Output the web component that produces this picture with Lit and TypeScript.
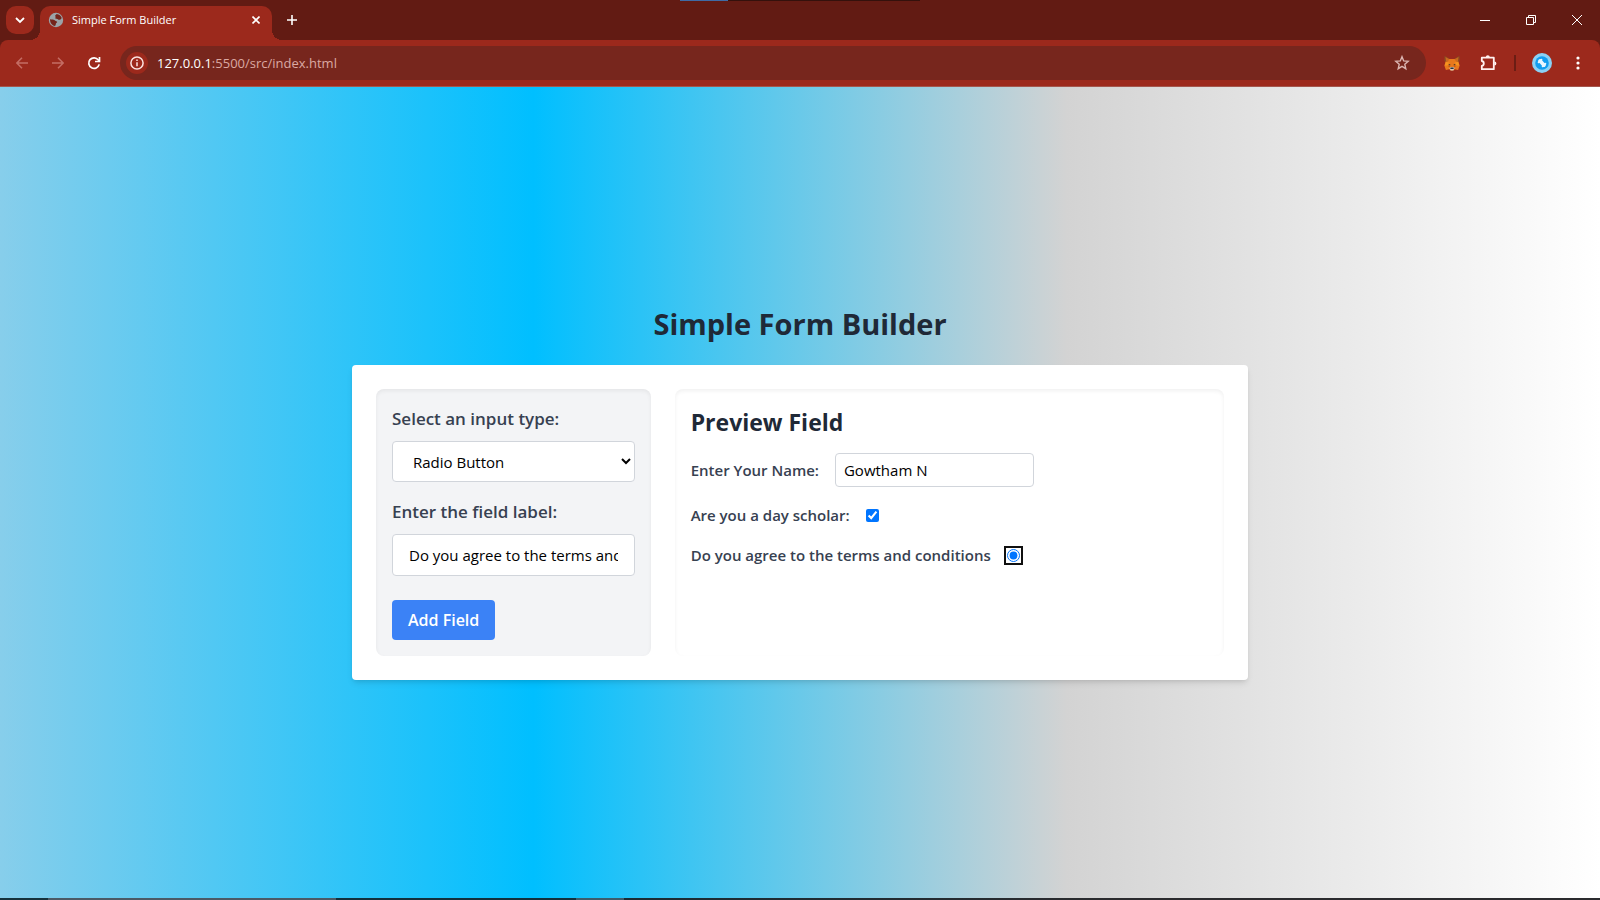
import { LitElement, html, css } from "lit";
import { customElement, property, state } from "lit/decorators.js";

const stack = css`"Segoe UI", "Open Sans", "Noto Sans", sans-serif`;

@customElement("browser-chrome")
class BrowserChrome extends LitElement {
  @property() pageTitle = "";
  @property() host = "";
  @property() path = "";

  static styles = css`
    :host {
      display: block;
      font-family: ${stack};
      color: #fff;
      background: #621b13;
    }
    button {
      display: flex;
      align-items: center;
      justify-content: center;
      padding: 0;
      border: 0;
      color: inherit;
      background: none;
    }
    svg {
      display: block;
      flex: none;
    }
    .strip {
      display: flex;
      height: 40px;
      padding-left: 6px;
      position: relative;
    }
    .progress {
      position: absolute;
      top: 0;
      left: 42.5%;
      width: 15%;
      height: 1px;
      background: linear-gradient(to right, #3f6ba5 20%, #34110c 20%);
    }
    .search {
      width: 28px;
      height: 28px;
      margin: 6px 6px 0 0;
      border-radius: 10px;
      background: #9c291c;
    }
    .tab {
      position: relative;
      display: flex;
      align-items: center;
      gap: 8px;
      box-sizing: border-box;
      width: 232px;
      height: 34px;
      margin-top: 6px;
      padding: 0 8px 6px;
      border-radius: 10px 10px 0 0;
      background: #9c291c;
    }
    .tab::before,
    .tab::after {
      content: "";
      position: absolute;
      bottom: 0;
      width: 10px;
      height: 10px;
    }
    .tab::before {
      right: 100%;
      background: radial-gradient(circle at 0 0, transparent 10px, #9c291c 10px);
    }
    .tab::after {
      left: 100%;
      background: radial-gradient(circle at 100% 0, transparent 10px, #9c291c 10px);
    }
    .title {
      flex: 1;
      font-size: 11px;
      line-height: 16px;
      white-space: nowrap;
    }
    .close {
      width: 16px;
      height: 16px;
    }
    .new {
      width: 28px;
      height: 28px;
      margin: 6px 0 0 6px;
    }
    .window {
      display: flex;
      margin-left: auto;
    }
    .window button {
      width: 46px;
      height: 40px;
    }
    .toolbar {
      display: flex;
      align-items: center;
      gap: 8px;
      padding: 6px 8px;
      border-radius: 8px 8px 0 0;
      border-bottom: 1px solid #a4564d;
      background: #9c291c;
    }
    .icon {
      width: 28px;
      height: 28px;
    }
    .dim {
      color: #c46d64;
    }
    .url {
      flex: 1;
      display: flex;
      align-items: center;
      gap: 9px;
      margin: 0 4px;
      padding: 0 10px 0 6px;
      height: 34px;
      border-radius: 17px;
      background: #77261d;
      font-size: 13px;
      line-height: 20px;
      color: #dba9a3;
    }
    .info {
      width: 22px;
      height: 22px;
      border-radius: 50%;
      background: #9c291c;
      color: #fbe4e1;
    }
    .address {
      flex: 1;
    }
    .name {
      color: #fff;
    }
    .divider {
      width: 2px;
      height: 16px;
      margin: 0 4px;
      background: #6b1d14;
    }
  `;

  render() {
    return html`
      <div class="strip">
        <div class="progress"></div>
        <button class="search" aria-label="Search tabs">
          <svg width="10" height="8" viewBox="0 0 10 8" fill="none" stroke="currentColor" stroke-width="1.8">
            <path d="M1 2l4 4 4-4" />
          </svg>
        </button>
        <div class="tab">
          <svg width="16" height="16" viewBox="0 0 16 16">
            <circle cx="8" cy="8" r="7.2" fill="#9ba3a8" />
            <path fill="#74241b" d="M8.7 2.1c2.4.2 4.3 1.7 5 3.9-.7 1.500-2 2-3.300 1.800-.5-.9-1.600-.8-2.700-1.100-.8-.5.2-1.500-.2-2.100-.9-.6.2-1.700 1.200-2.500z" />
            <path fill="#74241b" d="M2 7.200c1.900.3 4.200.2 5.100 1.200.5.800 2 .4 2.100 1.500-.1.800-1.200.9-1.300 1.900-.1.700-.3 1.600-.9 2.100C4 13.400 2 11 2 7.200z" />
          </svg>
          <span class="title">${this.pageTitle}</span>
          <button class="close" aria-label="Close tab">
            <svg width="8" height="8" viewBox="0 0 8 8" stroke="currentColor" stroke-width="1.6">
              <path d="M.5.5l7 7M7.5.5l-7 7" />
            </svg>
          </button>
        </div>
        <button class="new" aria-label="New tab">
          <svg width="10" height="10" viewBox="0 0 10 10" stroke="currentColor" stroke-width="1.6">
            <path d="M5 0v10M0 5h10" />
          </svg>
        </button>
        <div class="window">
          <button aria-label="Minimize">
            <svg width="10" height="10" viewBox="0 0 10 10" stroke="currentColor"><path d="M0 5.5h10" /></svg>
          </button>
          <button aria-label="Restore">
            <svg width="10" height="10" viewBox="0 0 10 10" fill="none" stroke="currentColor">
              <path d="M.5 2.5h7v7h-7zM2.5 2.5v-2h7v7h-2" />
            </svg>
          </button>
          <button aria-label="Close">
            <svg width="10" height="10" viewBox="0 0 10 10" stroke="currentColor"><path d="M0 0l10 10M10 0L0 10" /></svg>
          </button>
        </div>
      </div>
      <div class="toolbar">
        <button class="icon dim" aria-label="Back">
          <svg width="12" height="12" viewBox="0 0 12 12" fill="none" stroke="currentColor" stroke-width="1.5">
            <path d="M12 6H1M6 .7L.9 6 6 11.3" />
          </svg>
        </button>
        <button class="icon dim" aria-label="Forward">
          <svg width="12" height="12" viewBox="0 0 12 12" fill="none" stroke="currentColor" stroke-width="1.5">
            <path d="M0 6h11M6 .7L11.1 6 6 11.3" />
          </svg>
        </button>
        <button class="icon" aria-label="Reload">
          <svg width="14" height="14" viewBox="0 0 14 14" fill="none" stroke="currentColor" stroke-width="1.7">
            <path d="M12.2 8.4A5.300 5.300 0 1 1 11.300 3.900L12.400 5.200" />
            <path d="M12.500 1v4.500H8" />
          </svg>
        </button>
        <div class="url">
          <button class="info" aria-label="Site information">
            <svg width="14" height="14" viewBox="0 0 14 14" fill="none" stroke="currentColor" stroke-width="1.5">
              <circle cx="7" cy="7" r="6.1" />
              <path d="M7 6.2v4M7 3.6v1.5" />
            </svg>
          </button>
          <span class="address"><span class="name">${this.host}</span>${this.path}</span>
          <button class="icon" aria-label="Bookmark">
            <svg width="16" height="16" viewBox="0 0 16 16" fill="none" stroke="#dcb6b2" stroke-width="1.4">
              <path d="M8 1.7l1.700 4.200 4.500.4-3.400 3 1 4.400L8 11.400l-3.800 2.300 1-4.400-3.400-3 4.500-.4z" />
            </svg>
          </button>
        </div>
        <button class="icon" aria-label="MetaMask">
          <svg width="16" height="16" viewBox="0 0 16 16">
            <path fill="#8a4a22" d="M.6.8L6 4v4H1.500L.3 5zM15.400.8L10 4v4h4.500l1.200-3z" />
            <path fill="#c9691f" d="M1.500 2L6 4.600 5 7 2 6zM14.500 2L10 4.600 11 7l3-1z" />
            <path fill="#e8791d" d="M5.400 4h5.200l1.400 2.200 2.500.3 1.100 4.200-1.500 4.200-3.400-.7L9.300 15.500H6.700L5.300 14.200l-3.400.7L.4 10.700 1.500 6.500 4 6.200z" />
            <path fill="#f6931f" d="M2 7l3.300.6-.6 2.900H.6zM14 7l-3.300.6.6 2.900h4.100z" />
            <path fill="#c8560f" d="M3.400 9.900l2.600 1.300-.4 1.900zM12.600 9.900L10 11.200l.4 1.900z" />
            <path fill="#3a2a2c" d="M4 8.700l2.400.8-.4 1.300zM12 8.700l-2.400.8.4 1.300z" />
            <path fill="#d9c8ba" d="M5.300 12.700l1.500-.6h2.400l1.500.6-1.300 2.700H6.600z" />
            <path fill="#26313d" d="M6.500 12.600h3l.2 1.500H6.300z" />
          </svg>
        </button>
        <button class="icon" aria-label="Extensions">
          <svg width="18" height="18" viewBox="0 0 18 18">
            <path
              d="M2.800 3.700H14.800V15.200H2.800V11.900A2.500 2.500 0 0 0 2.800 7z"
              fill="none"
              stroke="#fff2f0"
              stroke-width="1.800"
              stroke-linejoin="round"
            />
            <path d="M6.800 3.200a2 2 0 0 1 4 0zM15.400 7.400a2 2 0 0 1 0 4z" fill="#fff2f0" />
          </svg>
        </button>
        <div class="divider"></div>
        <button class="icon" aria-label="Profile">
          <svg width="20" height="20" viewBox="0 0 20 20">
            <circle cx="10" cy="10" r="10" fill="#8ad1f5" />
            <circle cx="10" cy="10" r="6.8" fill="#119df0" />
            <path d="M8 7.8l4 4.400" stroke="#e9f6ff" stroke-width="3.6" stroke-linecap="round" />
            <path d="M9.400 6.700l-2.700 2.600M13.300 10.700l-2.600 2.600" stroke="#e9f6ff" stroke-width="2" stroke-linecap="round" />
          </svg>
        </button>
        <button class="icon" aria-label="Menu">
          <svg width="4" height="14" viewBox="0 0 4 14" fill="currentColor">
            <circle cx="2" cy="2" r="1.6" />
            <circle cx="2" cy="7" r="1.6" />
            <circle cx="2" cy="12" r="1.6" />
          </svg>
        </button>
      </div>
    `;
  }
}

@customElement("form-builder")
class FormBuilder extends LitElement {
  @state() private fieldLabel = "Do you agree to the terms and conditions";

  static styles = css`
    :host {
      display: flex;
      flex-direction: column;
      align-items: center;
      justify-content: center;
      font-family: ${stack};
      font-size: 15px;
      line-height: 24px;
      background: linear-gradient(to right, skyblue, deepskyblue, lightgray, white);
    }
    h1,
    h2 {
      margin: 0;
      color: #1f2937;
      font-weight: 700;
    }
    h1 {
      margin-bottom: 22px;
      font-size: 29px;
      line-height: 38px;
    }
    h2 {
      margin-bottom: 14px;
      font-size: 23px;
      line-height: 34px;
    }
    input,
    select,
    button {
      box-sizing: border-box;
      margin: 0;
      font: inherit;
    }
    .card {
      display: grid;
      grid-template-columns: 1fr 2fr;
      gap: 24px;
      box-sizing: border-box;
      width: 100%;
      max-width: 896px;
      padding: 24px;
      border-radius: 4px;
      background: #fff;
      box-shadow: 0 4px 6px -1px rgba(0, 0, 0, 0.1), 0 2px 4px -2px rgba(0, 0, 0, 0.1);
    }
    .panel {
      padding: 16px;
      border-radius: 8px;
      box-shadow: inset 0 2px 4px rgba(0, 0, 0, 0.06);
      min-width: 0;
    }
    .tools {
      background: #f3f4f6;
    }
    .caption {
      display: block;
      margin-bottom: 8px;
      font-size: 17px;
      line-height: 28px;
      font-weight: 600;
      color: #374151;
    }
    .control {
      display: block;
      width: 100%;
      padding: 8px 16px;
      border: 1px solid #d1d5db;
      border-radius: 4px;
      color: #000;
      background: #fff;
    }
    .kind {
      height: 41px;
      margin-bottom: 16px;
    }
    .text {
      height: 42px;
      margin-bottom: 24px;
    }
    .add {
      display: block;
      padding: 8px 16px;
      border: 0;
      border-radius: 4px;
      font-size: 16px;
      font-weight: 600;
      color: #fff;
      background: #3b82f6;
    }
    .row {
      display: flex;
      align-items: center;
      gap: 16px;
      margin-bottom: 16px;
      font-weight: 600;
      color: #374151;
    }
    .answer {
      width: 199px;
      height: 34px;
      padding: 4px 8px;
      border: 1px solid #d1d5db;
      border-radius: 4px;
      font-weight: 400;
      color: #000;
    }
    .mark {
      width: 13px;
      height: 13px;
      border-radius: 2px;
    }
    .mark:focus-visible {
      outline: 2px solid #101010;
      outline-offset: 1px;
    }
  `;

  firstUpdated() {
    this.renderRoot.querySelector<HTMLInputElement>("#terms")?.focus();
  }

  render() {
    return html`
      <h1>Simple Form Builder</h1>
      <div class="card">
        <section class="panel tools">
          <label class="caption" for="kind">Select an input type:</label>
          <select class="control kind" id="kind">
            <option>Text</option>
            <option>Checkbox</option>
            <option selected>Radio Button</option>
          </select>
          <label class="caption" for="label">Enter the field label:</label>
          <input class="control text" id="label" type="text" .value=${this.fieldLabel} />
          <button class="add" type="button">Add Field</button>
        </section>
        <section class="panel">
          <h2>Preview Field</h2>
          <div class="row">
            <label for="name">Enter Your Name:</label>
            <input class="answer" id="name" type="text" value="Gowtham N" />
          </div>
          <div class="row">
            <label for="scholar">Are you a day scholar:</label>
            <input class="mark" id="scholar" type="checkbox" checked />
          </div>
          <div class="row">
            <label for="terms">${this.fieldLabel}</label>
            <input class="mark" id="terms" type="radio" checked />
          </div>
        </section>
      </div>
    `;
  }
}

@customElement("app-root")
class AppRoot extends LitElement {
  static styles = css`
    :host {
      display: flex;
      flex-direction: column;
      min-height: 100vh;
    }
    .page {
      flex: 1;
    }
    .taskbar {
      height: 2px;
      background: linear-gradient(to right, #16323c 3%, #4b5a66 3% 21%, #12303c 21% 36%, #3d5d6c 36% 39%, #1b2c34 39%, #2b2b2e 70%);
    }
  `;

  render() {
    return html`
      <browser-chrome pageTitle="Simple Form Builder" host="127.0.0.1" path=":5500/src/index.html"></browser-chrome>
      <form-builder class="page"></form-builder>
      <div class="taskbar"></div>
    `;
  }
}
